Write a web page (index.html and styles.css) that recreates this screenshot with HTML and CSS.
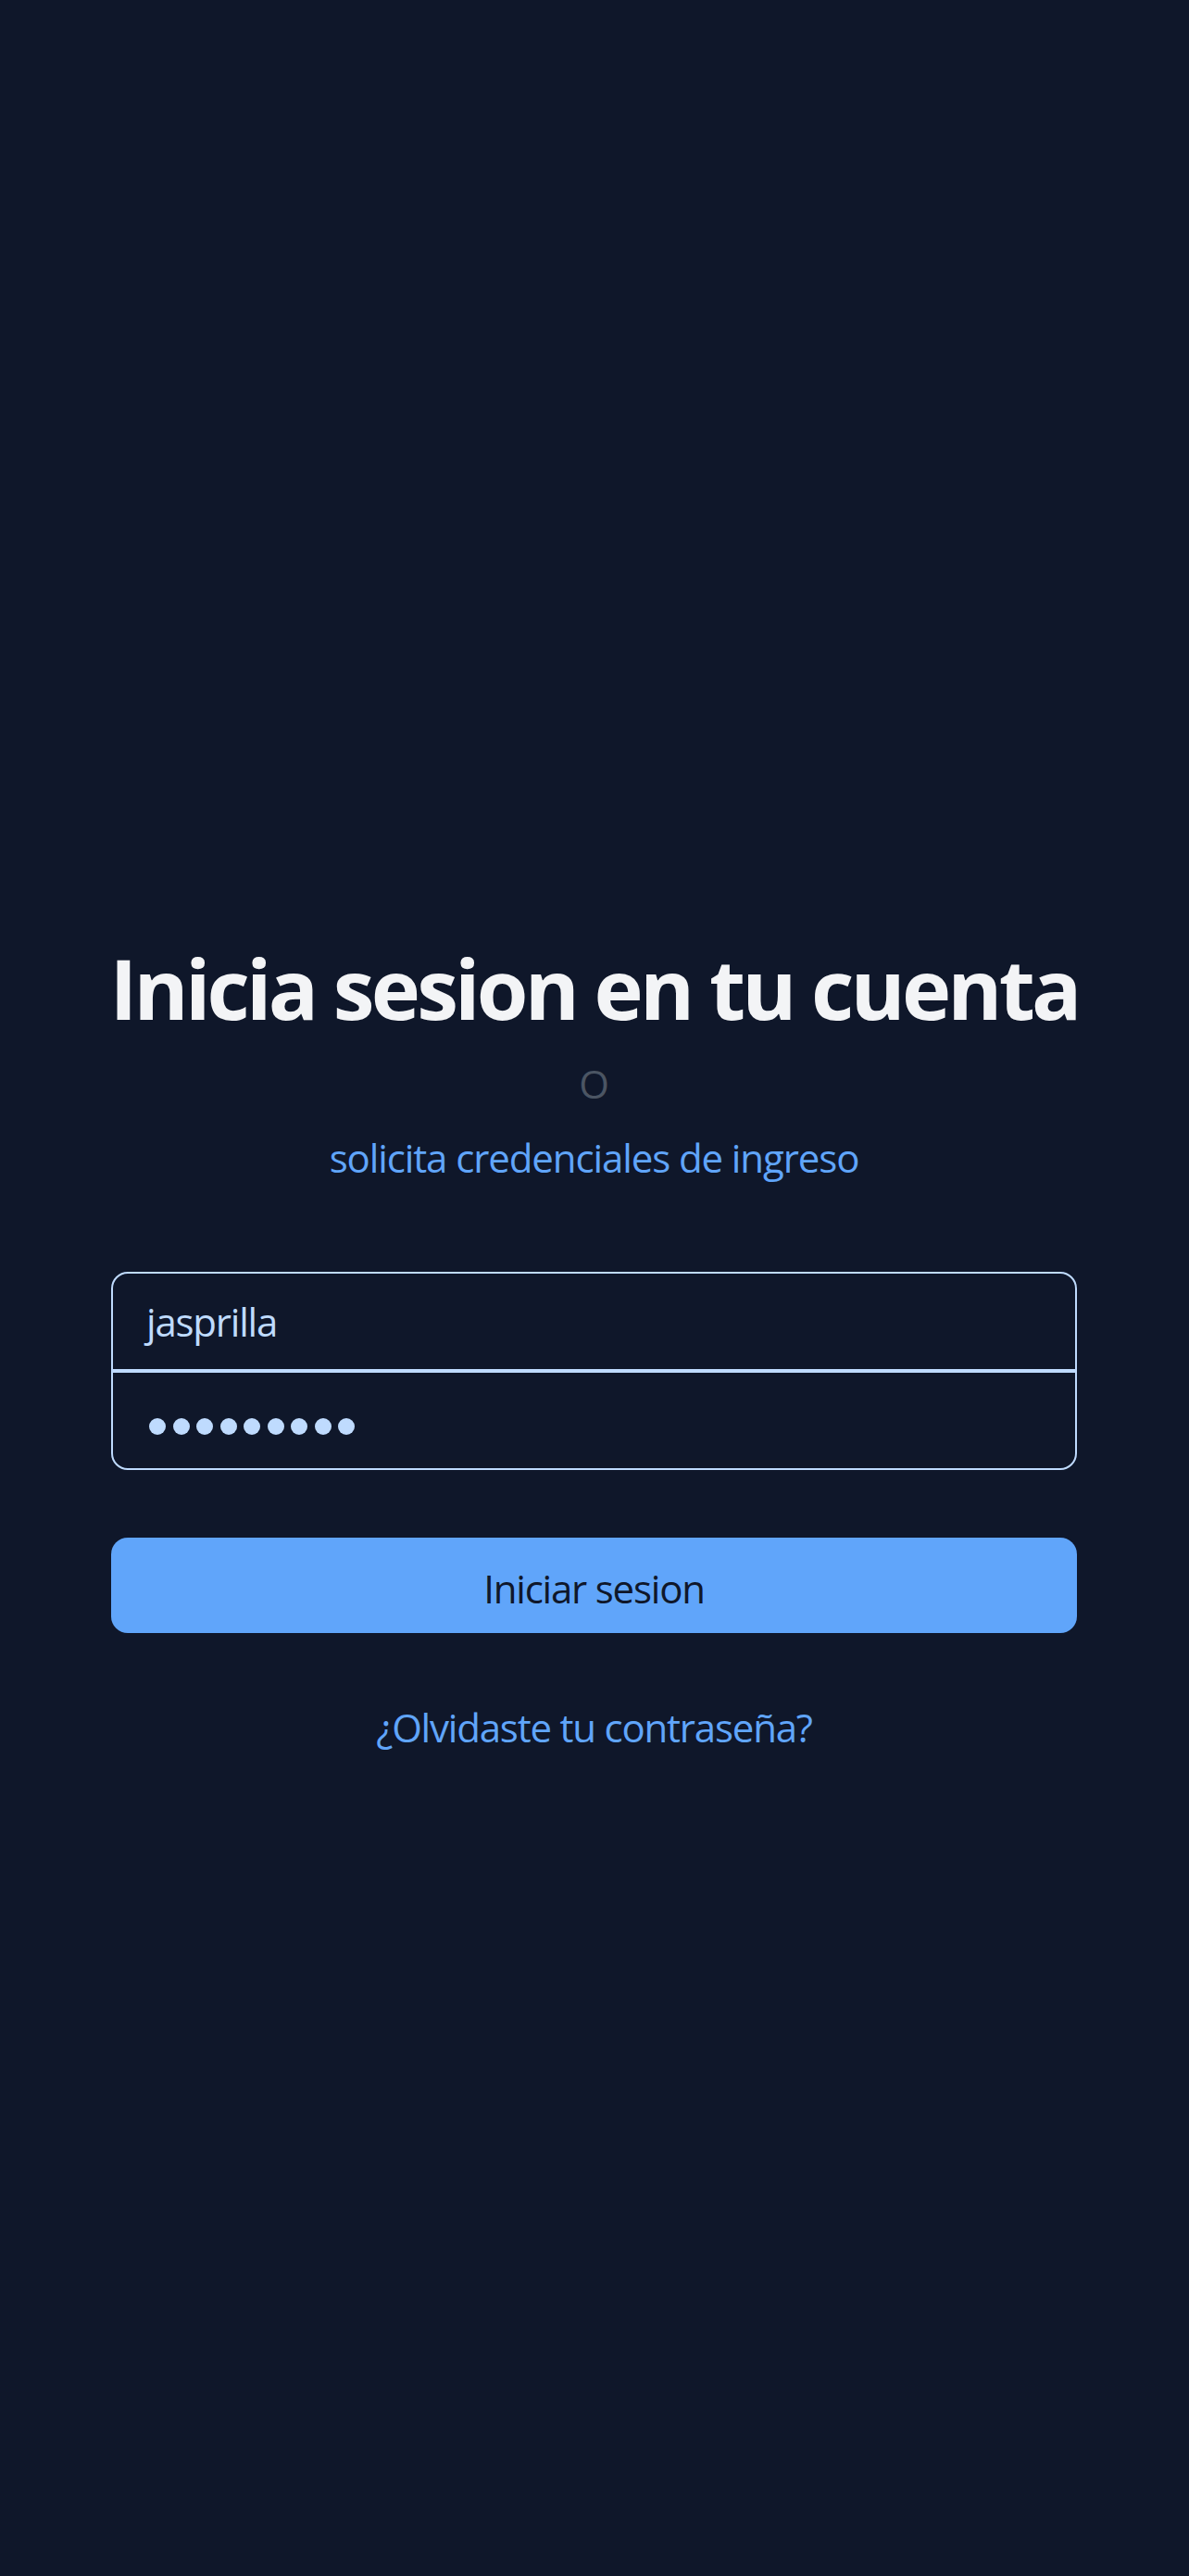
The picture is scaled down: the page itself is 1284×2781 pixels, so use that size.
FILE: index.html
```
<!DOCTYPE html>
<html lang="es">
<head>
<meta charset="utf-8">
<title>Inicia sesion</title>
<link rel="stylesheet" href="styles.css">
</head>
<body>
<main class="page">
  <div class="header">
    <h2 class="title">Inicia sesion en tu cuenta</h2>
    <p class="or">O</p>
    <a class="request" href="#">solicita credenciales de ingreso</a>
  </div>
  <form class="form">
    <div class="fields">
      <div class="field field-top">jasprilla</div>
      <div class="field field-bottom">
        <span class="dot"></span><span class="dot"></span><span class="dot"></span><span class="dot"></span><span class="dot"></span><span class="dot"></span><span class="dot"></span><span class="dot"></span><span class="dot"></span>
      </div>
    </div>
    <button class="submit" type="button">Iniciar sesion</button>
  </form>
  <a class="forgot" href="#">¿Olvidaste tu contraseña?</a>
</main>
</body>
</html>
```

FILE: styles.css
```
html, body {
  margin: 0;
  padding: 0;
  background: #0f172a;
  height: 2781px;
  overflow: hidden;
}
body {
  font-family: "Open Sans", "Noto Sans", sans-serif;
}
.page {
  display: flex;
  flex-direction: column;
  padding: 1012px 121px 0 120px;
}
.header {
  display: flex;
  flex-direction: column;
  align-items: center;
}
.title {
  margin: 0;
  font-size: 90px;
  line-height: 108px;
  font-weight: 700;
  color: #f3f4f6;
  text-align: center;
  letter-spacing: -3.8px;
  white-space: nowrap;
}
.or {
  margin: 20px 0 0;
  font-size: 42px;
  line-height: 60px;
  color: #4b5563;
}
.request {
  margin-top: 20px;
  font-size: 42px;
  line-height: 60px;
  color: #60a5fa;
  text-decoration: none;
  letter-spacing: -1.1px;
}
.form {
  margin-top: 93px;
  display: flex;
  flex-direction: column;
}
.fields {
  display: flex;
  flex-direction: column;
}
.field {
  height: 107px;
  box-sizing: border-box;
  border: 2px solid #bfdbfe;
  padding: 0 36px;
  display: flex;
  align-items: center;
  font-size: 42px;
  color: #bfdbfe;
  letter-spacing: -1.2px;
}
.field-top {
  border-radius: 18px 18px 0 0;
}
.field-bottom {
  border-radius: 0 0 18px 18px;
  gap: 7.5px;
  padding: 12px 0 0 39px;
}
.dot {
  width: 18px;
  height: 18px;
  border-radius: 50%;
  background: #bfdbfe;
}
.submit {
  margin-top: 73px;
  height: 103px;
  border: none;
  border-radius: 18px;
  background: #60a5fa;
  color: #0f172a;
  font-family: inherit;
  font-size: 42px;
  letter-spacing: -1.2px;
  padding: 5px 0 0;
}
.forgot {
  align-self: center;
  margin-top: 72px;
  font-size: 42px;
  line-height: 60px;
  color: #60a5fa;
  text-decoration: none;
  letter-spacing: -1.2px;
}
```
